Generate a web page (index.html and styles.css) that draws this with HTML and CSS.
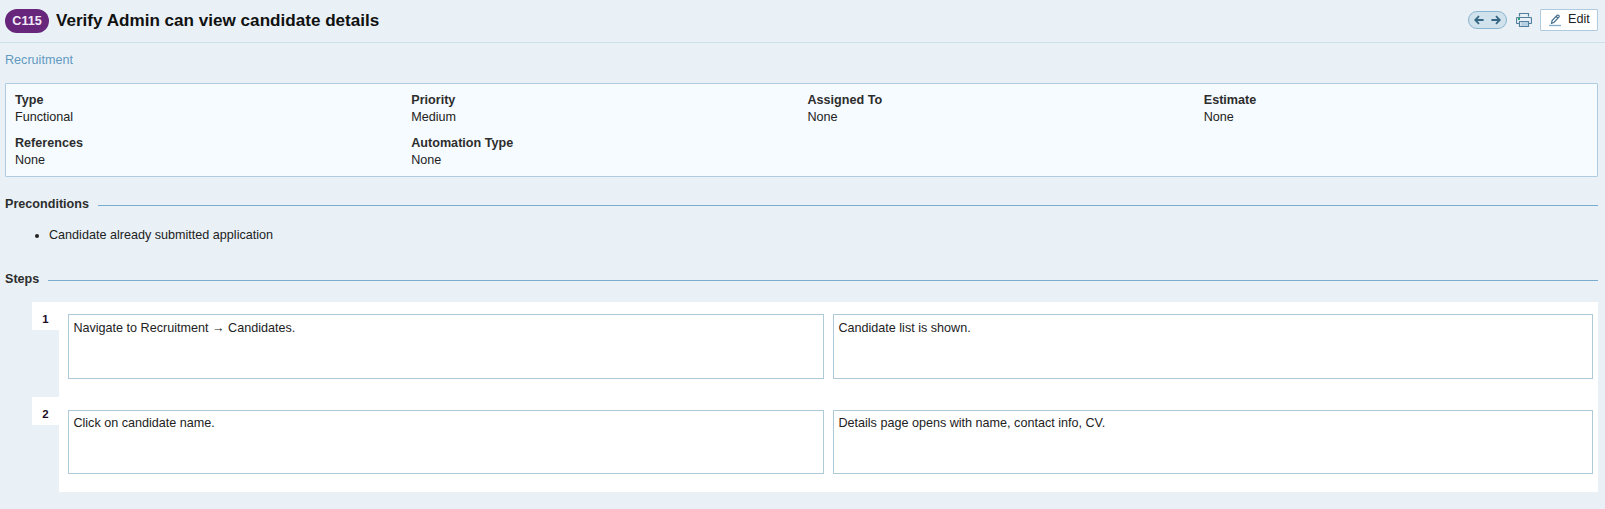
FILE: index.html
```html
<!DOCTYPE html>
<html lang="en">
<head>
<meta charset="utf-8">
<title>Verify Admin can view candidate details</title>
<link rel="stylesheet" href="styles.css">
</head>
<body>
<header class="header">
  <span class="badge">C115</span>
  <h1 class="title">Verify Admin can view candidate details</h1>
  <div class="toolbar">
    <div class="pager">
      <svg width="10" height="10" viewBox="0 0 10 10"><path d="M9.6 5H1.6M5 1.2L1.2 5L5 8.8"/></svg>
      <svg width="10" height="10" viewBox="0 0 10 10"><path d="M.4 5H8.4M5 1.2L8.800 5L5 8.8"/></svg>
    </div>
    <svg class="print" width="16" height="16" viewBox="0 0 16 16">
      <path class="line" d="M3.500 4.500V1.500H12.500V4.500M3.500 11.500H1.500Q.5 11.500 .5 10.500V6.500Q.5 5.500 1.500 5.500H14.500Q15.500 5.500 15.500 6.500V10.500Q15.500 11.500 14.500 11.500H12.500"/>
      <path class="line" d="M3.500 9.500H12.500V14.500H3.500Z"/>
      <path class="paper" d="M5 10h7v4H5z"/>
      <path class="led" d="M2 6h2v2H2z"/>
    </svg>
    <button class="edit">
      <svg width="13" height="13" viewBox="0 0 13 13"><path class="rule" d="M0 11.500H12"/><path class="pen" d="M2.500 9.300L3.100 6.500L8.200 1.300Q9 .7 9.800 1.400Q10.600 2.200 9.900 3.100L4.900 8.500ZM7.200 2.500L8.900 4.200"/></svg>
      <span>Edit</span>
    </button>
  </div>
</header>
<nav class="crumb"><a>Recruitment</a></nav>
<main class="content">
  <section class="fields">
    <div><b>Type</b><span>Functional</span></div>
    <div><b>Priority</b><span>Medium</span></div>
    <div><b>Assigned To</b><span>None</span></div>
    <div><b>Estimate</b><span>None</span></div>
    <div><b>References</b><span>None</span></div>
    <div><b>Automation Type</b><span>None</span></div>
  </section>
  <h2 class="heading">Preconditions</h2>
  <ul class="list"><li>Candidate already submitted application</li></ul>
  <h2 class="heading">Steps</h2>
  <section class="steps">
    <div class="step">
      <span class="num">1</span>
      <div class="body"><div class="cell">Navigate to Recruitment → Candidates.</div><div class="cell">Candidate list is shown.</div></div>
    </div>
    <div class="step second">
      <span class="num">2</span>
      <div class="body"><div class="cell">Click on candidate name.</div><div class="cell">Details page opens with name, contact info, CV.</div></div>
    </div>
  </section>
</main>
</body>
</html>
```
FILE: styles.css
```css
* { box-sizing: border-box; }
body {
  margin: 0;
  height: 509px;
  background: #e9f1f7;
  color: #222;
  font: 12.6px/17px "Liberation Sans", Arial, sans-serif;
}
.header {
  display: flex;
  align-items: flex-start;
  height: 43px;
  padding: 9px 7px 0 5px;
  border-bottom: 1px solid #cbe0eb;
}
.badge {
  width: 44px;
  height: 24px;
  border-radius: 12px;
  background: #67267b;
  color: #f3e9f7;
  font-weight: bold;
  line-height: 24px;
  text-align: center;
}
.title {
  margin: 0 0 0 7px;
  color: #111;
  font-size: 17.1px;
  line-height: 23px;
}
.toolbar { display: flex; margin-left: auto; }
.pager {
  display: flex;
  justify-content: space-between;
  align-items: center;
  width: 39px;
  height: 18px;
  margin: 2px 9px 0 0;
  padding: 0 5px;
  border: 1px solid #8bb4ce;
  border-radius: 9px;
  background: #d0e2ec;
}
.pager path { fill: none; stroke: #356684; stroke-width: 1.8; }
.print { margin: 3px 8px 0 0; }
.print .line { fill: none; stroke: #517f9d; stroke-width: 1.2; }
.print .paper { fill: #b5d0e2; }
.print .led { fill: #26a576; }
.edit {
  display: flex;
  align-items: flex-start;
  width: 58px;
  height: 22px;
  padding: 4px 0 0 8px;
  border: 1px solid #aecbdf;
  border-radius: 1px;
  background: #fff;
  color: #222;
  font: 12.6px/17px "Liberation Sans", Arial, sans-serif;
}
.edit svg { margin-right: 6px; }
.edit span { margin-top: -3px; }
.edit .rule { stroke: #83adc9; stroke-width: 1.3; }
.edit .pen { fill: none; stroke: #456f8c; stroke-width: 1.2; }
.crumb { height: 40px; padding: 9px 5px 0; color: #6399bf; }
.content { padding: 0 7px 0 5px; }
.fields {
  display: grid;
  grid-template-columns: repeat(4, 396.25px);
  grid-auto-rows: 34px;
  row-gap: 9px;
  height: 94px;
  padding: 8px 0 0 9px;
  border: 1px solid #aecbdf;
  border-radius: 1px;
  background: #f6fbff;
}
.fields b, .fields span { display: block; }
.fields b, .heading { color: #2d2d2d; }
.heading {
  display: flex;
  align-items: center;
  gap: 9px;
  margin: 19px 0 0;
  font-size: 12.6px;
  line-height: 17px;
}
.heading::after {
  content: "";
  flex: 1;
  height: 1px;
  margin-top: 2px;
  background: #7aaccf;
}
.list { margin: 14px 0 27px; padding-left: 44px; }
.list + .heading { margin-top: 0; }
.steps { margin: 14px 0 0 27px; }
.step { display: flex; align-items: flex-start; height: 95px; }
.num {
  width: 27px;
  height: 28px;
  background: #fff;
  color: #200c26;
  font: bold 11.4px/35px "Liberation Sans", Arial, sans-serif;
  text-align: center;
}
.body {
  display: grid;
  grid-template-columns: 756px 760px;
  gap: 9px;
  flex: 1;
  height: 95px;
  padding: 12px 5px 18px 9px;
  background: #fff;
}
.cell { padding: 5px 4.4px; border: 1px solid #aecad9; }
.second .body { padding: 13px 5px 18px 9px; }
.second .cell { padding-top: 4px; }
```
